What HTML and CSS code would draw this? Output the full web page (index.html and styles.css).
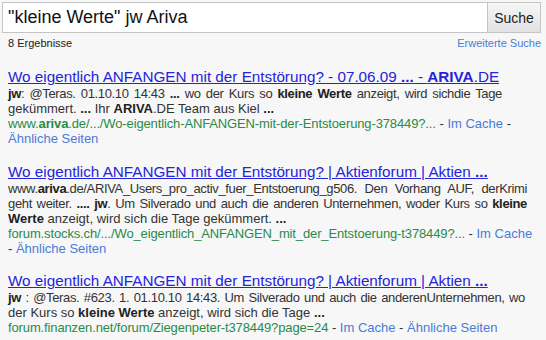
FILE: index.html
```html
<!DOCTYPE html>
<html lang="de">
<head>
    <meta charset="UTF-8">
    <title>"kleine Werte" jw Ariva</title>
    <link rel="stylesheet" href="styles.css">
</head>
<body>
    <div class="page">
        <form class="search-bar">
            <div class="search-input">"kleine Werte" jw Ariva</div>
            <button type="button" class="search-button">Suche</button>
        </form>

        <div class="meta">
            <span>8 Ergebnisse</span>
            <a class="advanced" href="#">Erweiterte Suche</a>
        </div>

        <div class="result">
            <a class="title" href="#">Wo eigentlich ANFANGEN mit der Entstörung? - 07.06.09 <b>...</b> - <b>ARIVA</b>.DE</a>
            <div class="snippet">
                <span class="line fill short"><b>jw</b>: @Teras. 01.10.10 14:43 <b>...</b> wo der Kurs so <b>kleine Werte</b> anzeigt, wird sichdie Tage</span>
                <span class="line">gekümmert. <b>...</b> Ihr <b>ARIVA</b>.DE Team aus Kiel <b>...</b></span>
                <span class="line"><span class="url">www.<b>ariva</b>.de/.../Wo-eigentlich-ANFANGEN-mit-der-Entstoerung-378449?...</span> - <a class="sub" href="#">Im Cache</a> -</span>
                <span class="line"><a class="sub" href="#">Ähnliche Seiten</a></span>
            </div>
        </div>

        <div class="result">
            <a class="title" href="#">Wo eigentlich ANFANGEN mit der Entstörung? | Aktienforum | Aktien <b>...</b></a>
            <div class="snippet">
                <span class="line fill">www.<b>ariva</b>.de/ARIVA_Users_pro_activ_fuer_Entstoerung_g506. Den Vorhang AUF, derKrimi</span>
                <span class="line fill">geht weiter. <b>....</b> <b>jw</b>. Um Silverado und auch die anderen Unternehmen, woder Kurs so <b>kleine</b></span>
                <span class="line"><b>Werte</b> anzeigt, wird sich die Tage gekümmert. <b>...</b></span>
                <span class="line"><span class="url">forum.stocks.ch/.../Wo_eigentlich_ANFANGEN_mit_der_Entstoerung-t378449?...</span> - <a class="sub" href="#">Im Cache</a></span>
                <span class="line">- <a class="sub" href="#">Ähnliche Seiten</a></span>
            </div>
        </div>

        <div class="result">
            <a class="title" href="#">Wo eigentlich ANFANGEN mit der Entstörung? | Aktienforum | Aktien <b>...</b></a>
            <div class="snippet">
                <span class="line fill narrow"><b>jw</b> : @Teras. #623. 1. 01.10.10 14:43. Um Silverado und auch die anderenUnternehmen, wo</span>
                <span class="line">der Kurs so <b>kleine Werte</b> anzeigt, wird sich die Tage <b>...</b></span>
                <span class="line"><span class="url">forum.finanzen.net/forum/Ziegenpeter-t378449?page=24</span> - <a class="sub" href="#">Im Cache</a> - <a class="sub" href="#">Ähnliche Seiten</a></span>
            </div>
        </div>
    </div>
</body>
</html>
```

FILE: styles.css
```css
body {
    margin: 0;
    background-color: #f7f7f7;
    font-family: "Liberation Sans", Arial, sans-serif;
    color: #333;
}

.page {
    padding: 2px 5px 0 2px;
}

/* Search bar */
.search-bar {
    display: flex;
    height: 31px;
    margin: 0;
}

.search-input {
    flex: 1;
    background-color: #fff;
    border: 1px solid #c4c4c4;
    border-right: none;
    font-size: 18px;
    line-height: 29px;
    padding-left: 5px;
    color: #111;
}

.search-button {
    width: 54px;
    border: 1px solid #c4c4c4;
    background: linear-gradient(#f6f6f6, #e2e2e2);
    font-family: "Liberation Sans", Arial, sans-serif;
    font-size: 14px;
    color: #222;
    padding: 0;
}

.meta {
    display: flex;
    justify-content: space-between;
    margin-top: 4px;
    padding-left: 6px;
    font-size: 11px;
    line-height: 13px;
    color: #222;
}

.advanced {
    color: #4a7bd8;
    text-decoration: none;
}

/* Results */
.result {
    margin-top: 17px;
    padding-left: 6px;
    width: 519px;
}

.meta + .result {
    margin-top: 18px;
}

.result:last-child {
    margin-top: 16px;
}

.title {
    display: block;
    font-size: 15.25px;
    line-height: 18px;
    color: #2424dc;
    white-space: nowrap;
}

.snippet {
    font-size: 13px;
    line-height: 15px;
}

.snippet b {
    color: #222;
}

.line {
    display: block;
    white-space: nowrap;
}

/* lines the result page stretches edge to edge */
.line.fill {
    text-align: justify;
    text-align-last: justify;
    white-space: normal;
    letter-spacing: -0.35px;
}

.line.short {
    width: 494px;
}

.line.narrow {
    width: 517px;
}

.url {
    color: #2a8a4a;
    letter-spacing: -0.13px;
}

.url b {
    color: #2a8a4a;
}

.sub {
    color: #4a7bd8;
    text-decoration: none;
}
```
